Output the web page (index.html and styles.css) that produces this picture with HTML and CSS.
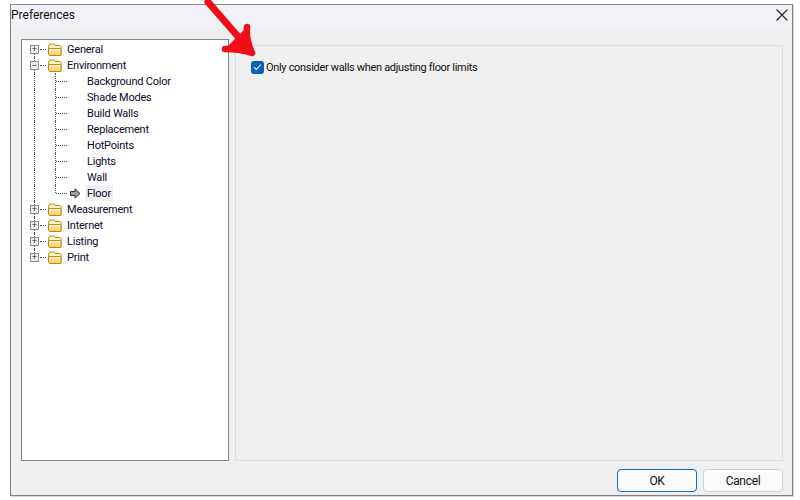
FILE: index.html
```html
<!DOCTYPE html>
<html lang="en">
<head>
    <meta charset="UTF-8">
    <title>Preferences</title>
    <link rel="stylesheet" href="styles.css">
</head>
<body>
    <div class="dialog">
        <div class="titlebar">
            <span class="title">Preferences</span>
            <svg class="close" width="12" height="12" viewBox="0 0 12 12"><path d="M0.5 0.5L11.5 11.5M11.5 0.5L0.5 11.5" stroke="#222" stroke-width="1.1" fill="none"/></svg>
        </div>
        <div class="content">
            <div class="tree">
                <div class="row top">
                    <span class="box">+</span><span class="dash"></span>
                    <svg class="folder" width="15" height="13" viewBox="0 0 15 13"><use href="#folder"/></svg>
                    <span class="label">General</span>
                </div>
                <div class="row top">
                    <span class="box">&minus;</span><span class="dash"></span>
                    <svg class="folder" width="15" height="13" viewBox="0 0 15 13"><use href="#folder"/></svg>
                    <span class="label">Environment</span>
                </div>
                <div class="row child"><span class="branch"></span><span class="label">Background Color</span></div>
                <div class="row child"><span class="branch"></span><span class="label">Shade Modes</span></div>
                <div class="row child"><span class="branch"></span><span class="label">Build Walls</span></div>
                <div class="row child"><span class="branch"></span><span class="label">Replacement</span></div>
                <div class="row child"><span class="branch"></span><span class="label">HotPoints</span></div>
                <div class="row child"><span class="branch"></span><span class="label">Lights</span></div>
                <div class="row child"><span class="branch"></span><span class="label">Wall</span></div>
                <div class="row child end">
                    <span class="branch"></span>
                    <svg class="pointer" width="11" height="11" viewBox="0 0 11 11"><path d="M0.5 3.5H5V0.8L10 5.5L5 10.2V7.5H0.5Z" fill="#9a9a9a" stroke="#222" stroke-width="0.9"/></svg>
                    <span class="label selected">Floor</span>
                </div>
                <div class="row top">
                    <span class="box">+</span><span class="dash"></span>
                    <svg class="folder" width="15" height="13" viewBox="0 0 15 13"><use href="#folder"/></svg>
                    <span class="label">Measurement</span>
                </div>
                <div class="row top">
                    <span class="box">+</span><span class="dash"></span>
                    <svg class="folder" width="15" height="13" viewBox="0 0 15 13"><use href="#folder"/></svg>
                    <span class="label">Internet</span>
                </div>
                <div class="row top">
                    <span class="box">+</span><span class="dash"></span>
                    <svg class="folder" width="15" height="13" viewBox="0 0 15 13"><use href="#folder"/></svg>
                    <span class="label">Listing</span>
                </div>
                <div class="row top end">
                    <span class="box">+</span><span class="dash"></span>
                    <svg class="folder" width="15" height="13" viewBox="0 0 15 13"><use href="#folder"/></svg>
                    <span class="label">Print</span>
                </div>
            </div>
            <div class="panel">
                <div class="option">
                    <span class="check">
                        <svg width="9" height="8" viewBox="0 0 9 8"><path d="M1 4.2L3.4 6.5L8 1.5" stroke="#fff" stroke-width="1.1" fill="none"/></svg>
                    </span>
                    <span class="option-text">Only consider walls when adjusting floor limits</span>
                </div>
            </div>
        </div>
        <div class="buttons">
            <button class="btn default">OK</button>
            <button class="btn">Cancel</button>
        </div>
    </div>

    <svg class="hidden" width="0" height="0">
        <defs>
            <linearGradient id="folderFill" x1="0" y1="0" x2="0" y2="1">
                <stop offset="0" stop-color="#fff6c8"/>
                <stop offset="1" stop-color="#f5c850"/>
            </linearGradient>
            <g id="folder">
                <path d="M1.5 11.5V3L3 1H7L8 2.5H13L14 3.5V11.5L13.5 12.5H2.5Z" fill="#fdf3c0" stroke="#c08a20"/>
                <path d="M1.5 5.5H14V11.5L13.5 12.5H2.5L1.5 11.5Z" fill="url(#folderFill)" stroke="#c08a20"/>
            </g>
        </defs>
    </svg>

    <!-- red annotation arrow drawn over the dialog -->
    <svg class="arrow" width="70" height="70" viewBox="0 0 70 70">
        <path d="M8 2L48 48" stroke="#f00d1a" stroke-width="7" stroke-linecap="round" fill="none"/>
        <path d="M47 27C46 36 48 44 52 53C44 50 35 49 25 49" stroke="#f00d1a" stroke-width="6.5" stroke-linecap="round" stroke-linejoin="round" fill="#f00d1a"/>
    </svg>
</body>
</html>
```

FILE: styles.css
```css
body {
    margin: 0;
    width: 800px;
    height: 500px;
    background: #ffffff;
    font-family: Roboto, "Liberation Sans", Arial, sans-serif;
    font-size: 11px;
    color: #000000;
    overflow: hidden;
    position: relative;
}
.dialog {
    box-sizing: border-box;
    width: 783px;
    height: 492px;
    margin: 4px 0 0 10px;
    border: 1px solid #808080;
    border-top-color: #8a8a8a;
    background: #efefef;
    box-shadow: 1px 1px 1px #d8d8d8;
    display: flex;
    flex-direction: column;
}
.titlebar {
    height: 22px;
    flex: none;
    background: #f3f2f8;
    display: flex;
    align-items: center;
    justify-content: space-between;
    padding: 0 4px 2px 0;
    box-sizing: border-box;
}
.title {
    font-size: 12px;
    color: #111;
}
.content {
    flex: 1;
    display: flex;
    gap: 6px;
    padding: 12px 9px 0 10px;
    min-height: 0;
}
.tree {
    box-sizing: border-box;
    width: 208px;
    border: 1px solid #7f8590;
    background: #ffffff;
    padding-top: 1px;
}
.row {
    height: 16px;
    display: flex;
    align-items: center;
    position: relative;
    color: #0a0a2a;
}
.top {
    padding-left: 8px;
}
.top::before {
    content: "";
    position: absolute;
    left: 12px;
    top: 0;
    height: 16px;
    border-left: 1px dotted #555;
}
.top:first-child::before {
    top: 8px;
    height: 8px;
}
.top.end::before {
    height: 4px;
}
.box {
    box-sizing: border-box;
    width: 9px;
    height: 9px;
    border: 1px solid #8a8f9a;
    background: #f0f0f0;
    font-family: "Liberation Sans", Arial, sans-serif;
    font-size: 9px;
    line-height: 7px;
    text-align: center;
    color: #223;
    position: relative;
    z-index: 1;
}
.dash {
    width: 6px;
    margin: 0 1px;
    border-top: 1px dotted #555;
}
.folder {
    margin: 0 3px 0 0;
    flex: none;
}
.child {
    padding-left: 63px;
}
.child::before {
    content: "";
    position: absolute;
    left: 12px;
    top: 0;
    height: 16px;
    border-left: 1px dotted #555;
}
.child::after {
    content: "";
    position: absolute;
    left: 33px;
    top: 0;
    height: 16px;
    border-left: 1px dotted #555;
}
.child.end::after {
    height: 8px;
}
.branch {
    position: absolute;
    left: 34px;
    top: 8px;
    width: 11px;
    border-top: 1px dotted #555;
}
.pointer {
    position: absolute;
    left: 48px;
    top: 3px;
}
.label {
    padding: 2px 2px 0;
    line-height: 14px;
    letter-spacing: -0.22px;
    white-space: nowrap;
}
.selected {
    background: #f0f0f0;
}
.panel {
    flex: 1;
    margin-top: 6px;
    box-sizing: border-box;
    border: 1px solid #dcdcdc;
    background: #efefef;
    padding: 14px 15px;
}
.option {
    display: flex;
    align-items: center;
    gap: 2px;
    color: #111;
}
.option-text {
    padding-top: 1px;
    letter-spacing: -0.32px;
}
.check {
    box-sizing: border-box;
    width: 13px;
    height: 13px;
    border-radius: 3px;
    background: #0a5fb8;
    display: flex;
    align-items: center;
    justify-content: center;
}
.buttons {
    flex: none;
    display: flex;
    justify-content: flex-end;
    gap: 6px;
    padding: 8px 9px 3px 0;
}
.btn {
    box-sizing: border-box;
    width: 80px;
    height: 23px;
    border: 1px solid #d0d0d0;
    border-radius: 4px;
    background: #fbfbfb;
    font-family: inherit;
    font-size: 12px;
    letter-spacing: -0.3px;
    color: #111;
    padding: 0;
}
.btn.default {
    border-color: #0f6cbd;
}
.hidden {
    position: absolute;
}
.arrow {
    position: absolute;
    left: 200px;
    top: 0;
}
```
